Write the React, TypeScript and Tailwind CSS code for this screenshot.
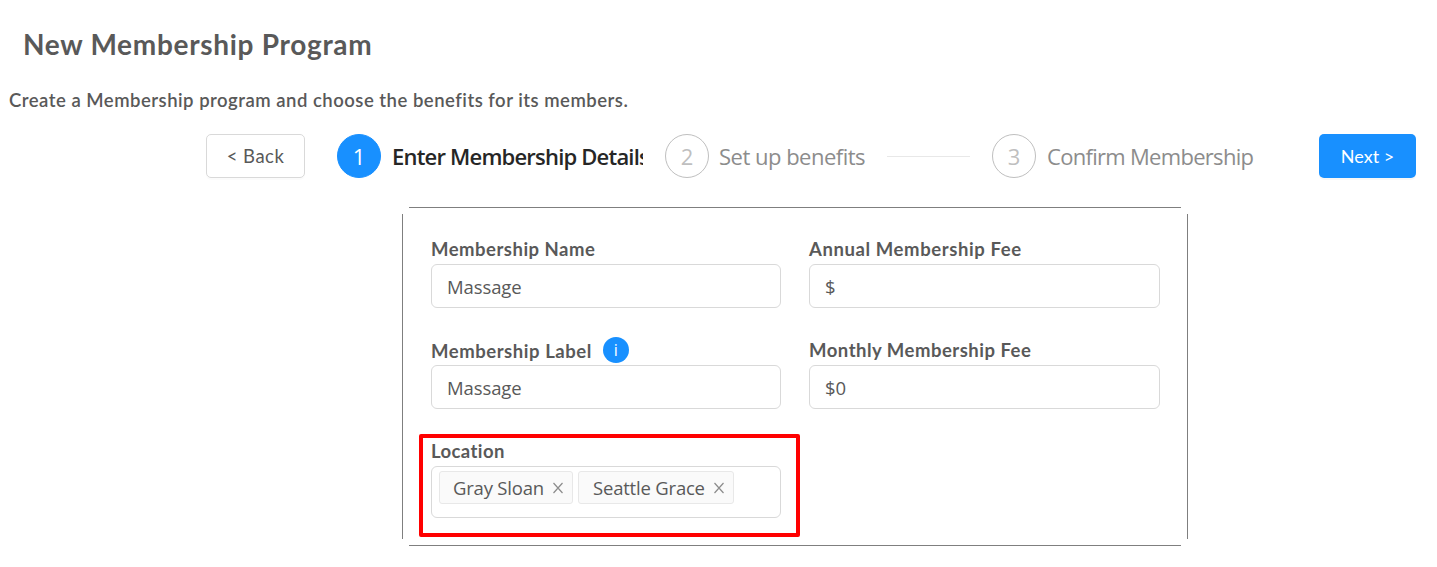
import { useState } from "react";
import type { ReactNode } from "react";

type StepProps = {
  number: number;
  active?: boolean;
  className: string;
  children: ReactNode;
};

const Step = ({ number, active, className, children }: StepProps) => (
  <div className={`flex items-center ${className}`}>
    <span
      className={`flex size-11 shrink-0 items-center justify-center rounded-full border text-[22px] ${
        active ? "border-[#1890ff] bg-[#1890ff] text-white" : "border-[#bfbfbf] text-[#bfbfbf]"
      }`}
    >
      {number}
    </span>
    {children}
  </div>
);

type FieldProps = {
  id: string;
  label: string;
  labelClassName: string;
  value: string;
  info?: boolean;
  onChange: (value: string) => void;
};

const Field = ({ id, label, labelClassName, value, info, onChange }: FieldProps) => (
  <div>
    <div className="flex h-[30px] items-center">
      <label htmlFor={id} className={`font-['Lato',sans-serif] text-[18.5px] font-bold whitespace-nowrap ${labelClassName}`}>
        {label}
      </label>
      {info && (
        <span className="mb-px ml-[11px] flex size-[26px] items-center justify-center rounded-full bg-[#1890ff] text-[16px] text-white">
          i
        </span>
      )}
    </div>
    <input
      id={id}
      value={value}
      onChange={(e) => onChange(e.target.value)}
      className="block h-11 w-full rounded-[6px] border border-[#d9d9d9] px-[15px] pt-px text-[18.5px] tracking-[-0.1px] text-[#595959] outline-none"
    />
  </div>
);

const Tag = ({ label, className, onRemove }: { label: string; className: string; onRemove: () => void }) => (
  <span className={`flex h-[33px] items-center justify-between rounded-[3px] border border-[#e8e8e8] bg-[#fafafa] pr-[8px] ${className}`}>
    <span className="text-[18.5px] whitespace-nowrap">{label}</span>
    <button type="button" aria-label={`Remove ${label}`} onClick={onRemove}>
      <svg width="12" height="12" viewBox="0 0 12 12" fill="none" stroke="#8c8c8c" strokeWidth="1.2">
        <path d="M1.5 1 L10.5 11 M10.5 1 L1.5 11" />
      </svg>
    </button>
  </span>
);

const App = () => {
  const [name, setName] = useState("Massage");
  const [label, setLabel] = useState("Massage");
  const [annualFee, setAnnualFee] = useState("$");
  const [monthlyFee, setMonthlyFee] = useState("$0");
  const [locations, setLocations] = useState([
    { label: "Gray Sloan", className: "w-[134px] pl-[13px] tracking-[-0.2px]" },
    { label: "Seattle Grace", className: "w-[156px] pl-[14px] tracking-[-0.2px]" },
  ]);

  return (
    <div className="h-[567px] w-[1437px] overflow-hidden bg-white font-['Open_Sans','Noto_Sans',sans-serif] text-[#595959]">
      <h1 className="pt-[26px] pl-[23px] font-['Lato',sans-serif] text-[28px] leading-9 font-bold tracking-[0.7px]">
        New Membership Program
      </h1>
      <p className="mt-[26px] pl-[9px] font-['Lato',sans-serif] text-[18.5px] leading-6 font-semibold tracking-[0.5px]">
        Create a Membership program and choose the benefits for its members.
      </p>

      {/* Wizard steps */}
      <div className="mt-[22px] flex h-11 items-center pl-[206px]">
        <button
          type="button"
          className="h-11 w-[99px] rounded-[5px] border border-[#d9d9d9] pt-[2px] font-['Lato',sans-serif] text-[18.5px] tracking-[0.5px] shadow-[0_2px_0_rgba(0,0,0,0.015)]"
        >
          &lt; Back
        </button>
        <Step number={1} active className="ml-8 w-[306px]">
          <span className="ml-[11px] overflow-hidden pt-px text-[22px] font-semibold tracking-[-0.8px] whitespace-nowrap text-[#262626]">
            Enter Membership Details
          </span>
        </Step>
        <Step number={2} className="ml-[22px] w-[305px]">
          <span className="ml-[10px] pt-px text-[22px] tracking-[-0.5px] whitespace-nowrap text-[#8c8c8c]">Set up benefits</span>
          <span className="ml-auto h-px w-[83px] bg-[#e8e8e8]" />
        </Step>
        <Step number={3} className="ml-[22px] w-[327px]">
          <span className="ml-[11px] pt-px text-[22px] tracking-[-0.7px] whitespace-nowrap text-[#8c8c8c]">Confirm Membership</span>
        </Step>
        <button
          type="button"
          className="h-11 w-[97px] rounded-[5px] bg-[#1890ff] font-['Lato',sans-serif] text-[18px] text-white shadow-[0_2px_0_rgba(0,0,0,0.03)]"
        >
          Next &gt;
        </button>
      </div>

      {/* Details card, its outline is open at the corners */}
      <div className="relative mt-[29px] ml-[402px] h-[339px] w-[786px] border border-[#7f7f7f] px-7 pt-[26px]">
        <span className="absolute -top-px -left-px size-[7px] bg-white" />
        <span className="absolute -top-px -right-px size-[7px] bg-white" />
        <span className="absolute -bottom-px -left-px size-[7px] bg-white" />
        <span className="absolute -right-px -bottom-px size-[7px] bg-white" />

        <div className="grid grid-cols-[350px_351px] gap-x-7 gap-y-[27px]">
          <Field id="name" label="Membership Name" labelClassName="pt-[2px] tracking-[0.5px]" value={name} onChange={setName} />
          <Field id="annual" label="Annual Membership Fee" labelClassName="pt-[2px] tracking-[0.6px]" value={annualFee} onChange={setAnnualFee} />
          <Field id="label" label="Membership Label" labelClassName="pt-[4px] tracking-[0.55px]" value={label} info onChange={setLabel} />
          <Field id="monthly" label="Monthly Membership Fee" labelClassName="pt-[2px] tracking-[0.5px]" value={monthlyFee} onChange={setMonthlyFee} />
        </div>

        <div className="-ml-3 mt-[25px] h-[103px] w-[381px] rounded-[2px] border-4 border-[#ff0000] pl-2">
          <div className="pb-px font-['Lato',sans-serif] text-[18.5px] leading-[27px] font-bold tracking-[0.4px]">Location</div>
          <div className="flex h-[52px] w-[350px] gap-[5px] rounded-[6px] border border-[#d9d9d9] pt-[4px] pl-[7px]">
            {locations.map((location) => (
              <Tag
                key={location.label}
                label={location.label}
                className={location.className}
                onRemove={() => setLocations(locations.filter((l) => l !== location))}
              />
            ))}
          </div>
        </div>
      </div>
    </div>
  );
};

export default App;
